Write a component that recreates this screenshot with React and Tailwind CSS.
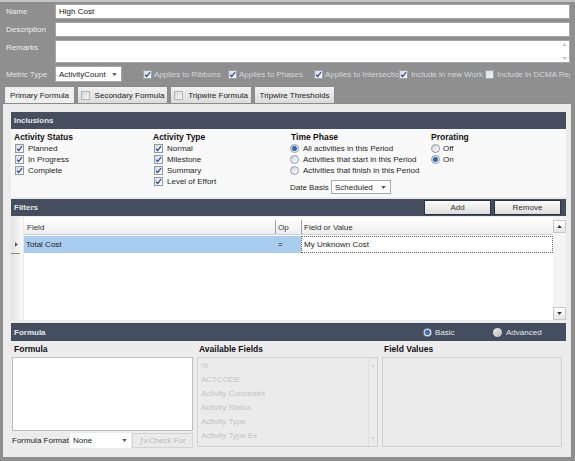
import React from "react";

const font = "font-['Liberation_Sans',Arial,sans-serif]";

function Check({ checked, light }) {
  return (
    <span
      className={`flex w-[9px] h-[9px] shrink-0 items-center justify-center border ${
        light ? "border-[#9aa3ae] bg-linear-to-br from-[#d9dde3] to-[#f4f5f7]" : "border-[#8e9aac] bg-linear-to-br from-[#d6dbe3] to-white"
      }`}
    >
      {checked && (
        <svg viewBox="0 0 8 8" className="w-[7px] h-[7px]">
          <path d="M1.2 4.3 L3.1 6.3 L6.9 1.2" stroke="#2a4a86" strokeWidth="1.3" fill="none" />
        </svg>
      )}
    </span>
  );
}

function Radio({ on }) {
  return (
    <span className="flex w-[9px] h-[9px] shrink-0 items-center justify-center rounded-full border border-[#8e9aac] bg-linear-to-br from-[#cfd4dc] to-white">
      {on && <span className="w-[5px] h-[5px] rounded-full bg-[#2f74c8] border border-[#1d4f91]" />}
    </span>
  );
}

function Select({ value, className }) {
  return (
    <div className={`flex items-center justify-between bg-white border border-[#a9a9a9] pl-[3px] pr-[4px] text-[#222] ${className}`}>
      <span>{value}</span>
      <svg viewBox="0 0 6 4" className="w-[5px] h-[3px]">
        <path d="M0 0 L6 0 L3 4 Z" fill="#555" />
      </svg>
    </div>
  );
}

function Header({ title, children }) {
  return (
    <div className="flex items-center justify-between h-[17px] bg-[#454e5e] pl-[3px] pr-[5px]">
      <span className="font-bold text-[#e3e7ed]">{title}</span>
      {children}
    </div>
  );
}

function TopRow({ label, h, children }) {
  return (
    <div className="flex mb-[3px]" style={{ height: h }}>
      <div className="w-[49px] pt-[2px] text-[#eeeeee]">{label}</div>
      <div className="flex-1">{children}</div>
    </div>
  );
}

function TopCheck({ label, checked, w, gap = "ml-[2px]" }) {
  return (
    <div className={`flex items-center overflow-hidden whitespace-nowrap ${w}`}>
      <Check checked={checked} light />
      <span className={`${gap} text-[#d4d7dc]`}>{label}</span>
    </div>
  );
}

const fields = ["%", "ACTCODE", "Activity Constraint", "Activity Status", "Activity Type", "Activity Type Ex", "Actual Cost"];

export default function App() {
  return (
    <div className={`w-[575px] h-[461px] overflow-hidden bg-[#8f8f8f] border-t-2 border-[#c4c4c4] text-[8px] leading-[11px] ${font}`}>
      <div className="pt-[2px] pl-[6px] pr-[5px]">
        <TopRow label="Name" h="15px">
          <div className="h-full bg-white border border-[#a6a6a6] pl-[3px] flex items-center text-[#111]">High Cost</div>
        </TopRow>
        <TopRow label="Description" h="15px">
          <div className="h-full bg-white border border-[#a6a6a6]" />
        </TopRow>
        <TopRow label="Remarks" h="23px">
          <div className="h-full bg-white border border-[#a6a6a6] flex justify-end">
            <div className="w-[10px] flex flex-col justify-between items-center py-[2px]">
              <svg viewBox="0 0 6 4" className="w-[5px] h-[3px]"><path d="M0 4 L6 4 L3 0 Z" fill="#c5c5c5" /></svg>
              <svg viewBox="0 0 6 4" className="w-[5px] h-[3px]"><path d="M0 0 L6 0 L3 4 Z" fill="#c5c5c5" /></svg>
            </div>
          </div>
        </TopRow>
        <div className="flex items-center h-[16px]">
          <div className="w-[49px] text-[#e2e2e2]">Metric Type</div>
          <Select value="ActivityCount" className="w-[67px] h-[16px]" />
          <div className="flex ml-[21px] flex-1 overflow-hidden">
            <TopCheck label="Applies to Ribbons" checked w="w-[85px]" />
            <TopCheck label="Applies to Phases" checked w="w-[86px]" />
            <TopCheck label="Applies to Intersections" checked w="w-[85px]" />
            <TopCheck label="Include in new Work Orders" checked w="w-[86px]" gap="ml-[3px]" />
            <TopCheck label="Include in DCMA Report" w="flex-1" gap="ml-[3px]" />
          </div>
        </div>
      </div>

      <div className="flex items-end h-[21px] pl-[4px] gap-[2px]">
        {[
          ["Primary Formula", "w-[71px]", false, true],
          ["Secondary Formula", "w-[91px]", true, false],
          ["Tripwire Formula", "w-[82px]", true, false],
          ["Tripwire Thresholds", "w-[81px]", false, false],
        ].map(([t, w, box, sel]) => (
          <div
            key={t}
            className={`${w} h-[17px] flex items-center justify-center gap-[5px] border border-b-0 border-[#8a8a8a] text-[#222] ${
              sel ? "bg-[#efefef]" : "bg-linear-to-b from-[#f2f2f2] to-[#dcdcdc]"
            }`}
          >
            {box && <span className="w-[9px] h-[9px] border border-[#b5b5b5] bg-linear-to-br from-[#d9d9d9] to-[#f5f5f5]" />}
            <span>{t}</span>
          </div>
        ))}
      </div>

      <div className="ml-[2px] mr-[3px] h-[355px] border border-[#8a8a8a] bg-[#ececec] pt-[8px] pl-[8px] pr-[5px] flex flex-col">
        {/* Inclusions */}
        <Header title="Inclusions" />
        <div className="h-[68px] bg-[#f9f9f9] flex pl-[3px] pt-[3px] text-[#1e1e1e]">
          <div className="w-[139px]">
            <div className="font-bold text-[8.5px] h-[11px] text-[#111]">Activity Status</div>
            {["Planned", "In Progress", "Complete"].map((t) => (
              <div key={t} className="flex items-center h-[11px] gap-[4px] pl-[1px]">
                <Check checked />
                <span>{t}</span>
              </div>
            ))}
          </div>
          <div className="w-[137px]">
            <div className="font-bold text-[8.5px] h-[11px] text-[#111]">Activity Type</div>
            {["Normal", "Milestone", "Summary", "Level of Effort"].map((t) => (
              <div key={t} className="flex items-center h-[11px] gap-[4px] pl-[1px]">
                <Check checked />
                <span>{t}</span>
              </div>
            ))}
          </div>
          <div className="w-[140px]">
            <div className="font-bold text-[8.5px] h-[11px] text-[#111] pl-[1px]">Time Phase</div>
            {["All activities in this Period", "Activities that start in this Period", "Activities that finish in this Period"].map((t, i) => (
              <div key={t} className="flex items-center h-[11px] gap-[4px]">
                <Radio on={i === 0} />
                <span>{t}</span>
              </div>
            ))}
            <div className="flex items-center mt-[4px] h-[14px]">
              <span className="w-[41px] whitespace-nowrap">Date Basis</span>
              <Select value="Scheduled" className="w-[60px] h-[14px]" />
            </div>
          </div>
          <div className="flex-1 pl-[1px]">
            <div className="font-bold text-[8.5px] h-[11px] text-[#111]">Prorating</div>
            {["Off", "On"].map((t, i) => (
              <div key={t} className="flex items-center h-[11px] gap-[3px]">
                <Radio on={i === 1} />
                <span>{t}</span>
              </div>
            ))}
          </div>
        </div>

        {/* Filters */}
        <div className="mt-[2px]">
          <Header title="Filters">
            <div className="flex gap-[3px]">
              {["Add", "Remove"].map((b) => (
                <div
                  key={b}
                  className="w-[67px] h-[15px] flex items-center justify-center border border-[#2c333e] bg-linear-to-b from-[#fbfbfb] to-[#dedede] text-[#333]"
                >
                  {b}
                </div>
              ))}
            </div>
          </Header>
        </div>
        <div className="mt-[1px] h-[103px] bg-white flex">
          <div className="w-[13px] bg-linear-to-r from-[#e3e3e3] to-[#fafafa] flex flex-col border-r border-[#e8e8e8]">
            <div className="h-[19px]" />
            <div className="h-[17px] flex items-center pl-[4px]">
              <svg viewBox="0 0 4 6" className="w-[3px] h-[5px]"><path d="M0 0 L4 3 L0 6 Z" fill="#555" /></svg>
            </div>
            <div className="h-px w-[9px] bg-[#888]" />
          </div>
          <div className="flex-1 flex flex-col pt-[3px]">
            <div className="flex h-[15px] bg-linear-to-b from-white to-[#ececec] border-b border-[#d0d0d0] text-[#333]">
              <div className="w-[251px] pl-[3px] flex items-center">Field</div>
              <div className="w-[26px] border-l border-[#a0a0a0] pl-[2px] flex items-center">Op</div>
              <div className="flex-1 border-l border-[#a0a0a0] pl-[2px] flex items-center">Field or Value</div>
            </div>
            <div className="flex h-[17px] mt-[1px] text-[#1a1a1a]">
              <div className="w-[251px] bg-[#a9cdef] pl-[2px] flex items-center">Total Cost</div>
              <div className="w-[26px] bg-[#a9cdef] pl-[3px] flex items-center">=</div>
              <div className="flex-1 border border-dotted border-[#666] pl-[2px] flex items-center">My Unknown Cost</div>
            </div>
          </div>
          <div className="w-[13px] flex flex-col justify-between pt-[3px] bg-[#f4f4f4]">
            <div className="h-[13px] border border-[#c8c8c8] bg-linear-to-b from-white to-[#e6e6e6] flex items-center justify-center">
              <svg viewBox="0 0 6 4" className="w-[5px] h-[3px]"><path d="M0 4 L6 4 L3 0 Z" fill="#333" /></svg>
            </div>
            <div className="h-[13px] border border-[#c8c8c8] bg-linear-to-b from-white to-[#e6e6e6] flex items-center justify-center">
              <svg viewBox="0 0 6 4" className="w-[5px] h-[3px]"><path d="M0 0 L6 0 L3 4 Z" fill="#333" /></svg>
            </div>
          </div>
        </div>

        {/* Formula */}
        <div className="mt-[3px]">
          <div className="flex items-center h-[18px] bg-[#454e5e] pl-[3px]">
            <span className="font-bold text-[#e3e7ed] w-[409px]">Formula</span>
            <div className="flex items-center gap-[3px] w-[70px]">
              <Radio on />
              <span className="text-[#e3e7ed]">Basic</span>
            </div>
            <div className="flex items-center gap-[4px]">
              <span className="w-[9px] h-[9px] rounded-full bg-linear-to-br from-[#e8e8e8] to-[#bdbdbd]" />
              <span className="text-[#e3e7ed]">Advanced</span>
            </div>
          </div>
        </div>
        <div className="flex gap-[4px] pt-[3px] pl-[1px]">
          <div className="w-[181px]">
            <div className="font-bold text-[8.5px] h-[13px] pl-[2px] text-[#111]">Formula</div>
            <div className="h-[74px] bg-white border border-[#bdbdbd]" />
            <div className="flex items-center mt-[2px] h-[15px]">
              <span className="w-[58px] text-[#222]">Formula Format</span>
              <Select value="None" className="w-[61px] h-[15px] border-0" />
              <div className="ml-[1px] flex-1 h-[15px] flex items-center justify-center border border-[#d4d4d4] bg-[#ebebeb] text-[#b9b9b9]">
                <span className="italic mr-[1px]">ƒx</span>Check For
              </div>
            </div>
          </div>
          <div className="w-[181px]">
            <div className="font-bold text-[8.5px] h-[13px] pl-[2px] text-[#111]">Available Fields</div>
            <div className="h-[90px] border border-[#d2d2d2] bg-[#ebebeb] flex overflow-hidden">
              <div className="flex-1 pl-[3px] pt-[1px] text-[#c3c3c3] leading-[14px]">
                {fields.map((f) => (
                  <div key={f}>{f}</div>
                ))}
              </div>
              <div className="w-[9px] border-l border-[#e0e0e0] flex flex-col justify-between items-center py-[6px]">
                <svg viewBox="0 0 6 4" className="w-[4px] h-[3px]"><path d="M0 4 L6 4 L3 0 Z" fill="#d4d4d4" /></svg>
                <svg viewBox="0 0 6 4" className="w-[4px] h-[3px]"><path d="M0 0 L6 0 L3 4 Z" fill="#d4d4d4" /></svg>
              </div>
            </div>
          </div>
          <div className="w-[180px]">
            <div className="font-bold text-[8.5px] h-[13px] pl-[2px] text-[#111]">Field Values</div>
            <div className="h-[90px] border border-[#d2d2d2] bg-[#ebebeb]" />
          </div>
        </div>
      </div>
    </div>
  );
}
